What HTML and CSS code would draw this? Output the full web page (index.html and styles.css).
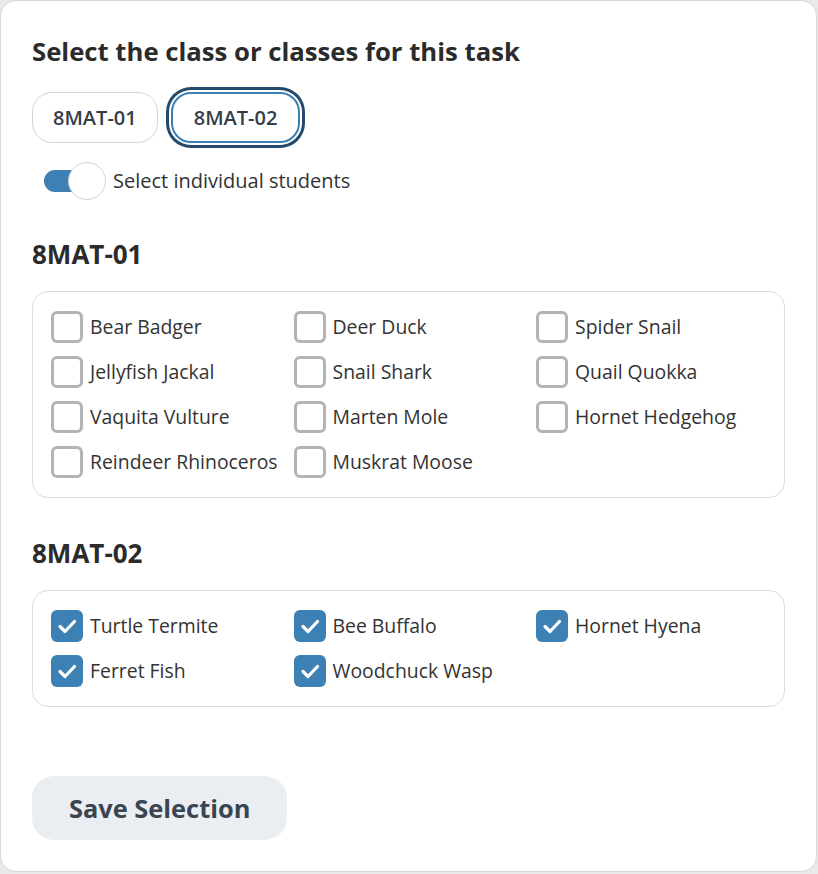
FILE: index.html
```html
<!DOCTYPE html>
<html lang="en">
<head>
  <meta charset="UTF-8">
  <title>Select classes</title>
  <link rel="stylesheet" href="styles.css">
</head>
<body>
  <div class="modal">
    <h2 class="title">Select the class or classes for this task</h2>

    <div class="pills">
      <button class="pill">8MAT-01</button>
      <button class="pill active">8MAT-02</button>
    </div>

    <label class="toggle-row">
      <span class="toggle"><span class="knob"></span></span>
      Select individual students
    </label>

    <h3 class="class-name">8MAT-01</h3>
    <div class="student-box">
      <label class="student"><span class="check"></span>Bear Badger</label>
      <label class="student"><span class="check"></span>Deer Duck</label>
      <label class="student"><span class="check"></span>Spider Snail</label>
      <label class="student"><span class="check"></span>Jellyfish Jackal</label>
      <label class="student"><span class="check"></span>Snail Shark</label>
      <label class="student"><span class="check"></span>Quail Quokka</label>
      <label class="student"><span class="check"></span>Vaquita Vulture</label>
      <label class="student"><span class="check"></span>Marten Mole</label>
      <label class="student"><span class="check"></span>Hornet Hedgehog</label>
      <label class="student"><span class="check"></span>Reindeer Rhinoceros</label>
      <label class="student"><span class="check"></span>Muskrat Moose</label>
    </div>

    <h3 class="class-name">8MAT-02</h3>
    <div class="student-box">
      <label class="student"><span class="check checked"><svg viewBox="0 0 32 32"><path d="M9 16.5l5 5 9.5-10"/></svg></span>Turtle Termite</label>
      <label class="student"><span class="check checked"><svg viewBox="0 0 32 32"><path d="M9 16.5l5 5 9.5-10"/></svg></span>Bee Buffalo</label>
      <label class="student"><span class="check checked"><svg viewBox="0 0 32 32"><path d="M9 16.5l5 5 9.5-10"/></svg></span>Hornet Hyena</label>
      <label class="student"><span class="check checked"><svg viewBox="0 0 32 32"><path d="M9 16.5l5 5 9.5-10"/></svg></span>Ferret Fish</label>
      <label class="student"><span class="check checked"><svg viewBox="0 0 32 32"><path d="M9 16.5l5 5 9.5-10"/></svg></span>Woodchuck Wasp</label>
    </div>

    <button class="save">Save Selection</button>
  </div>
</body>
</html>
```

FILE: styles.css
```css
* {
  box-sizing: border-box;
}

body {
  margin: 0;
  background-color: #e9e9e9;
  font-family: "Open Sans", Lato, sans-serif;
  color: #2b2b2b;
}

.modal {
  width: 817px;
  height: 872px;
  background: #fff;
  border: 1px solid #d9d9d9;
  border-radius: 16px;
  padding: 36px 31px 0 31px;
}

.title {
  margin: 0;
  font-size: 25.7px;
  font-weight: 700;
  line-height: 30px;
  color: #2b2b2b;
}

.pills {
  display: flex;
  gap: 13px;
  margin-top: 25px;
}

.pill {
  height: 51px;
  padding: 0 20px;
  border: 1px solid #cfd6dc;
  border-radius: 20px;
  background: #fff;
  font-family: inherit;
  font-size: 20px;
  font-weight: 600;
  color: #333d47;
}

.pill.active {
  padding: 0 21px;
  border: 2px solid #3b80b4;
  box-shadow: 0 0 0 2px #fff, 0 0 0 5px #244a6b;
}

.toggle-row {
  display: flex;
  align-items: center;
  margin-top: 19px;
  margin-left: 12px;
  font-size: 20px;
  line-height: 24px;
  color: #333;
}

.toggle {
  position: relative;
  width: 62px;
  height: 37px;
  margin-right: 7px;
  display: flex;
  align-items: center;
}

.toggle::before {
  content: "";
  width: 44px;
  height: 22px;
  border-radius: 11px;
  background: #3c80b4;
}

.knob {
  position: absolute;
  left: 24px;
  top: 0;
  width: 38px;
  height: 38px;
  border-radius: 50%;
  background: #fff;
  border: 1px solid #d4d4d4;
}

.class-name {
  margin: 40px 0 0 0;
  font-size: 26px;
  font-weight: 700;
  line-height: 30px;
  color: #2b2b2b;
}

.student-box {
  margin-top: 22px;
  border: 1px solid #dcdcdc;
  border-radius: 16px;
  padding: 19px 18px;
  display: grid;
  grid-template-columns: repeat(3, 242.5px);
  row-gap: 13px;
}

.student {
  display: flex;
  align-items: center;
  font-size: 19.4px;
  line-height: 24px;
  color: #333;
  white-space: nowrap;
}

.check {
  width: 32px;
  height: 32px;
  flex: none;
  border: 3px solid #b4b4b4;
  border-radius: 6px;
  margin-right: 7px;
}

.check.checked {
  border: none;
  background: #3c80b4;
}

.check svg {
  display: block;
  width: 32px;
  height: 32px;
  fill: none;
  stroke: #fff;
  stroke-width: 3.2;
  stroke-linecap: round;
  stroke-linejoin: round;
}

.save {
  margin-top: 69px;
  height: 64px;
  padding: 0 37px;
  border: none;
  border-radius: 22px;
  background: #eaeef2;
  font-family: inherit;
  font-size: 25.4px;
  font-weight: 700;
  color: #3a4550;
}
```
